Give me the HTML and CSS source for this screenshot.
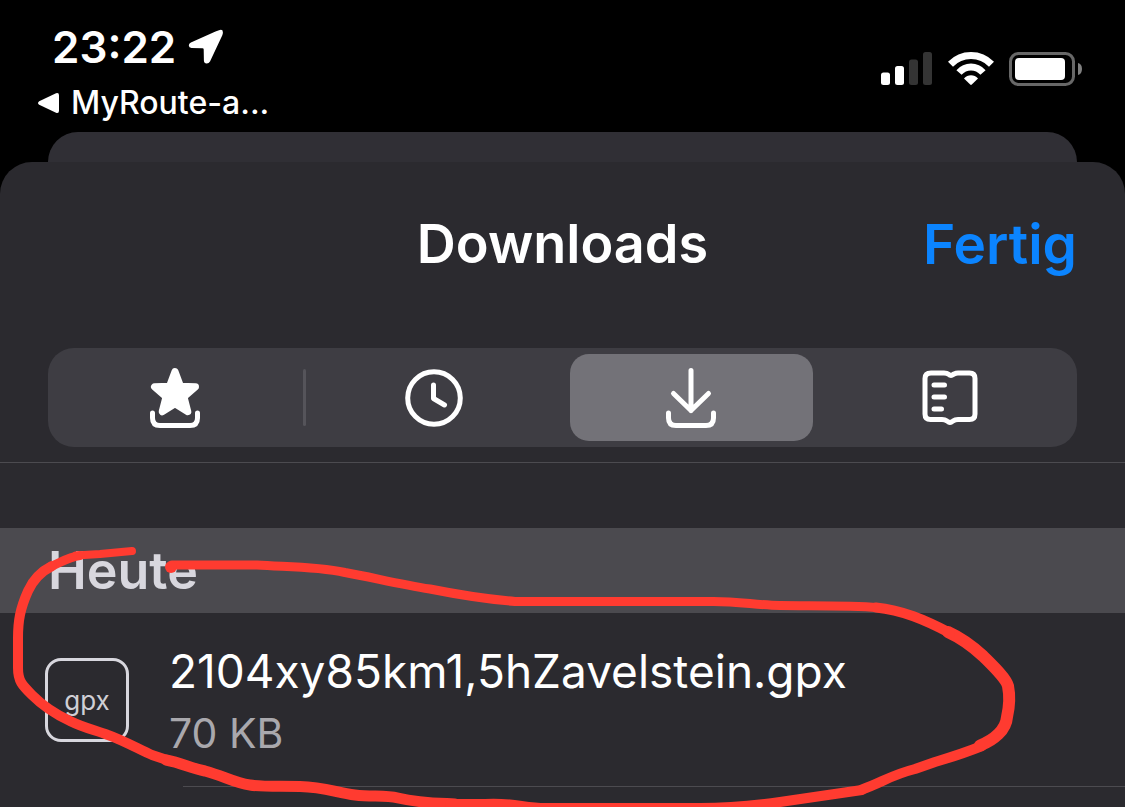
FILE: index.html
```html
<!DOCTYPE html>
<html lang="de">
<head>
<meta charset="utf-8">
<meta name="viewport" content="width=device-width, initial-scale=1">
<title>Downloads</title>
<link rel="stylesheet" href="styles.css">
</head>
<body>
<div class="screen">
  <header class="status">
    <div class="status-left">
      <div class="clock">
        <time>23:22</time>
        <svg width="36" height="36" viewBox="0 0 36 36" aria-hidden="true"><path d="M31 1.200Q35.500-.4 34.800 4.500Q34.500 6 33.500 8L22 32.500Q20.800 34.700 18.600 34.600Q16 34.400 15.900 31.500L15.700 20.400Q15.700 19.200 14.500 19.200L3.500 19Q.9 18.900.8 16.500Q.8 14.600 2.900 13.500L27.500 2.500Z" fill="#fff"/></svg>
      </div>
      <button class="back" type="button">
        <svg width="22" height="22" viewBox="0 0 22 22" aria-hidden="true"><path d="M1.200 9.200L18 1.200Q21 .2 21 3.200V18.800Q21 21.800 18 20.800L1.200 12.800Q-1.200 11 1.200 9.200Z" fill="#fff"/></svg>
        <span>MyRoute-a...</span>
      </button>
    </div>
    <div class="status-right">
      <svg width="52" height="33" viewBox="0 0 52 33" role="img" aria-label="Mobilfunk"><g fill="#fff"><rect y="20.500" width="9" height="12.500" rx="2.500"/><rect x="14" y="14" width="9" height="19" rx="2.500"/></g><g fill="#343434"><rect x="28" y="7.500" width="9" height="25.500" rx="2.500"/><rect x="42" width="9" height="33" rx="2.500"/></g></svg>
      <svg width="46" height="33" viewBox="0 0 46 33" role="img" aria-label="WLAN"><g fill="none" stroke="#fff" stroke-width="7"><path d="M2.500 12.200Q11 3.500 23 3.500T43.500 12.200"/><path d="M11 20.500Q16 15 23 15T35 20.500"/></g><path d="M16 26.500Q19 23.200 23 23.200T30 26.500L23.800 32.600Q23 33.300 22.200 32.600Z" fill="#fff"/></svg>
      <svg width="74" height="34" viewBox="0 0 74 34" role="img" aria-label="Batterie"><rect x="1.500" y="1.500" width="63" height="31" rx="8" fill="none" stroke="#686868" stroke-width="3"/><rect x="6" y="6" width="50" height="22" rx="4" fill="#fff"/><path d="M69 11Q73 12 73 17T69 23Z" fill="#808080"/></svg>
    </div>
  </header>
  <div class="card-behind"></div>
  <main class="sheet">
    <div class="titlebar">
      <h1>Downloads</h1>
      <button class="done" type="button">Fertig</button>
    </div>
    <div class="tabs" role="tablist">
      <button class="tab first" type="button" role="tab" aria-selected="false" aria-label="Favoriten">
        <svg width="64" height="64" viewBox="0 0 64 64"><path d="M32 5.500L37.500 20.300L52.500 20.800L41 30.800L44.800 45.700L32 37.800L19.200 45.700L23 30.800L11.500 20.800L26.500 20.300Z" fill="#fff" stroke="#fff" stroke-width="7" stroke-linejoin="round"/><path d="M9.500 47V52Q9.500 59.500 17 59.500H47Q54.500 59.500 54.500 52V47" class="line"/></svg>
      </button>
      <button class="tab" type="button" role="tab" aria-selected="false" aria-label="Verlauf">
        <svg width="64" height="64" viewBox="0 0 64 64"><circle cx="32" cy="32" r="26.300" class="line"/><path d="M31.500 19V32.500L42.500 39" class="line"/></svg>
      </button>
      <button class="tab selected" type="button" role="tab" aria-selected="true" aria-label="Downloads">
        <svg width="64" height="64" viewBox="0 0 64 64"><path d="M32 4.500V44.500M14.500 27.500L32 44.500L49.500 27.500M9.500 47V52Q9.500 59.500 17 59.500H47Q54.500 59.500 54.500 52V47" class="line"/></svg>
      </button>
      <button class="tab last" type="button" role="tab" aria-selected="false" aria-label="Leseliste">
        <svg width="64" height="64" viewBox="0 0 64 64"><path d="M13 7H26Q29 7 31 8.500L32 9.200Q33 9.600 34 9.200L36 8Q38 7 40 7H51.500Q57 7 57 12.500V48Q57 53.500 51.500 53.500H40Q37 53.500 35 55L33.500 56Q32 56.800 30.500 56L29 55Q27 53.500 24 53.500H12.500Q7 53.500 7 48V12.500Q7 7 13 7ZM16 19H26.500M16 31H26.500M16 43H23.500" class="line"/></svg>
      </button>
    </div>
    <section class="list">
      <h2>Heute</h2>
      <ul>
        <li class="file">
          <span class="badge">gpx</span>
          <div class="info">
            <span class="name">2104xy85km1,5hZavelstein.gpx</span>
            <span class="size">70 KB</span>
          </div>
        </li>
      </ul>
      <svg class="marker" viewBox="0 528 1125 279" aria-hidden="true">
        <path stroke-width="8" d="M132 551L100 554L76 555.500"/>
        <path stroke-width="9" d="M80 555.500C68 557 60 563 50 567"/>
        <path stroke-width="10" d="M52 566C40 572 33 580 28 591C20 609 18 621 18 638V668C18 681 22 685 32 695C43 706 57 715 70 721C84 728 95 730 108 735C125 741 140 750 152 755L170 761"/>
        <path stroke-width="11" d="M166 760C182 763 190 768 205 771C224 776 234 783 250 785C262 787 280 786 300 786.500C325 787 337 793 355 795C372 797 385 795 398 798C420 803 435 803 455 804"/>
        <path stroke-width="10" d="M450 804H485C510 802 525 808 545 808H700C735 808 758 805 780 802L862 790"/>
        <path stroke-width="10" d="M862 789.500C883 782 891 775 915 769L935 762C952 757 967 752 982 746"/>
        <path stroke-width="12" d="M980 745.500C994 740 1006 730 1007 717C1010 704 1010 696 1008 686C1006 678 991 664 983 656C970 644 959 637 948 632"/>
        <path stroke-width="10" d="M950 633C925 620 902 610 876 607.500"/>
        <path stroke-width="9" d="M878 607.500C848 605 810 606 780 605.500C755 605 737 601 710 601.500H515C485 599 450 593 430 589C398 584 371 577 345 572.500C315 566 285 567 257 565H172"/>
        <circle cx="171" cy="567" r="6"/>
      </svg>
    </section>
  </main>
</div>
</body>
</html>
```
FILE: styles.css
```css
* {
  box-sizing: border-box;
}

body {
  margin: 0;
  background: #000;
  color: #fff;
  font-family: Inter, "Liberation Sans", sans-serif;
}

button {
  padding: 0;
  border: 0;
  background: none;
  color: inherit;
  font: inherit;
}

svg {
  display: block;
}

.screen {
  display: flex;
  flex-direction: column;
  min-height: 100vh;
  overflow: hidden;
}

.status {
  display: flex;
  justify-content: space-between;
  min-height: 132px;
  padding: 19px 42px 0 38px;
}

.clock {
  display: flex;
  align-items: center;
  gap: 12px;
  padding-left: 14px;
  font-size: 44px;
  font-weight: 600;
  line-height: 56px;
}

.back {
  display: flex;
  align-items: center;
  gap: 11px;
  margin-top: 8px;
  font-size: 32px;
  font-weight: 500;
  line-height: 40px;
}

.status-right {
  display: flex;
  align-items: center;
  gap: 15px;
  height: 99px;
}

.card-behind {
  height: 60px;
  margin: 0 48px -30px;
  border-radius: 30px 30px 0 0;
  background: #302f35;
}

.sheet {
  display: flex;
  flex: 1;
  flex-direction: column;
  border-radius: 32px 32px 0 0;
  background: #2b2a2f;
}

.titlebar {
  display: grid;
  grid-template-columns: 1fr auto 1fr;
  align-items: center;
  padding: 48px 48px 70px;
  font-size: 55px;
  font-weight: 600;
  line-height: 68px;
}

h1 {
  grid-column: 2;
  margin: 0;
  font-size: 54px;
  font-weight: 600;
}

.done {
  justify-self: end;
  color: #0b84ff;
}

.tabs {
  display: grid;
  grid-template-columns: repeat(4, 1fr);
  margin: 0 48px 15px;
  padding: 6px 0;
  border-radius: 26px;
  background: #3e3d43;
}

.tab {
  display: flex;
  align-items: center;
  justify-content: center;
  height: 87px;
  margin: 0 7px;
  border-radius: 19px;
}

.tab.selected {
  background: #737278;
}

.first {
  position: relative;
  margin: 0 9px 0 6px;
}

.last {
  margin: 0 6px 0 9px;
}

.first::after {
  position: absolute;
  top: 15px;
  right: -10px;
  bottom: 15px;
  width: 3px;
  border-radius: 2px;
  background: #55545a;
  content: "";
}

.line {
  fill: none;
  stroke: #fff;
  stroke-width: 5;
  stroke-linecap: round;
  stroke-linejoin: round;
}

.list {
  position: relative;
  flex: 1;
  padding-top: 65px;
  border-top: 1px solid #4c4b50;
}

h2 {
  margin: 0;
  padding: 10px 48px;
  background: #4b4a4f;
  color: #d8d7de;
  font-size: 52px;
  font-weight: 600;
  line-height: 65px;
}

ul {
  margin: 0;
  padding: 0;
  list-style: none;
}

.file {
  display: flex;
  align-items: center;
  gap: 40px;
  padding: 0 45px;
  min-height: 174px;
  background: linear-gradient(#4c4b50, #4c4b50) 183px 100% / 100% 1px no-repeat;
}

.badge {
  display: grid;
  place-items: center;
  width: 84px;
  height: 84px;
  border: 3px solid #d8d7de;
  border-radius: 16px;
  color: #d0cfd5;
  font-size: 26px;
}

.info {
  display: flex;
  flex-direction: column;
  gap: 6px;
}

.name {
  font-size: 46px;
  line-height: 60px;
}

.size {
  color: #a9a8ad;
  font-size: 41px;
  line-height: 52px;
}

.marker {
  position: absolute;
  top: 65px;
  left: 0;
  width: 100%;
  overflow: visible;
  fill: none;
  stroke: #ff3b30;
  stroke-linecap: round;
  stroke-linejoin: round;
  pointer-events: none;
}

.marker circle {
  fill: #ff3b30;
  stroke: none;
}
```
